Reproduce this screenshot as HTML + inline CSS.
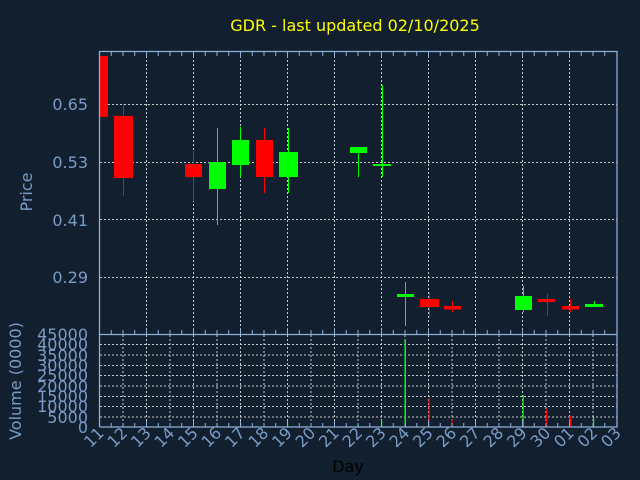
<!DOCTYPE html>
<html><head><style>
html,body{margin:0;padding:0;background:#111f2f;}
svg{display:block;}
text{font-family:"DejaVu Sans","Liberation Sans",sans-serif;}
</style></head><body>
<svg width="640" height="480" viewBox="0 0 640 480" xmlns="http://www.w3.org/2000/svg">
<rect width="640" height="480" fill="#111f2f"/>
<text x="355" y="31" font-size="16" fill="#ffff00" text-anchor="middle">GDR - last updated 02/10/2025</text>
<g stroke="#c8c8c8" stroke-width="1" stroke-dasharray="2,2" fill="none">
<path d="M146.5 52V334M193.5 52V334M240.5 52V334M287.5 52V334M334.5 52V334M381.5 52V334M428.5 52V334M475.5 52V334M522.5 52V334M569.5 52V334"/>
<path d="M100 104.5H617M100 162.5H617M100 219.5H617M100 277.5H617"/>
<path d="M123 335V427M146.5 335V427M170 335V427M193.5 335V427M217 335V427M240.5 335V427M264 335V427M287.5 335V427M311 335V427M334.5 335V427M358 335V427M381.5 335V427M405 335V427M428.5 335V427M452 335V427M475.5 335V427M499 335V427M522.5 335V427M546 335V427M569.5 335V427M593 335V427"/>
<path d="M100 344.5H617M100 355H617M100 365.5H617M100 375.5H617M100 386H617M100 396.5H617M100 406.5H617M100 417H617"/>
</g>
<g>
<rect x="99.5" y="56" width="8.5" height="61" fill="#ff0000"/>
<line x1="123.5" y1="104" x2="123.5" y2="196" stroke="#ff0000"/><rect x="114" y="116" width="19" height="62" fill="#ff0000"/>
<line x1="193.5" y1="151" x2="193.5" y2="201" stroke="#ff0000"/><rect x="185" y="164" width="17" height="13" fill="#ff0000"/>
<line x1="217.5" y1="128" x2="217.5" y2="225" stroke="#00ff00"/><rect x="209" y="162" width="17" height="27" fill="#00ff00"/>
<line x1="240.5" y1="127" x2="240.5" y2="177" stroke="#00ff00"/><rect x="232" y="140" width="17" height="25" fill="#00ff00"/>
<line x1="264.5" y1="128" x2="264.5" y2="193" stroke="#ff0000"/><rect x="256" y="140" width="17" height="37" fill="#ff0000"/>
<line x1="288.5" y1="128" x2="288.5" y2="193" stroke="#00ff00"/><rect x="279" y="152" width="19" height="25" fill="#00ff00"/>
<line x1="358.5" y1="147" x2="358.5" y2="177" stroke="#00ff00"/><rect x="350" y="147" width="17" height="6" fill="#00ff00"/>
<line x1="382.5" y1="85" x2="382.5" y2="177" stroke="#00ff00"/><rect x="373" y="164" width="18" height="2" fill="#00ff00"/>
<line x1="405.5" y1="282" x2="405.5" y2="326" stroke="#00ff00"/><rect x="397" y="294" width="17" height="3" fill="#00ff00"/>
<line x1="429.5" y1="292" x2="429.5" y2="317" stroke="#ff0000"/><rect x="420" y="299" width="19" height="8" fill="#ff0000"/>
<line x1="452.5" y1="301" x2="452.5" y2="312" stroke="#ff0000"/><rect x="444" y="306" width="17" height="3.5" fill="#ff0000"/>
<line x1="523.5" y1="286" x2="523.5" y2="312" stroke="#00ff00"/><rect x="515" y="296" width="17" height="14" fill="#00ff00"/>
<line x1="547.5" y1="294" x2="547.5" y2="316" stroke="#ff0000"/><rect x="538" y="299" width="17" height="3" fill="#ff0000"/>
<line x1="570.5" y1="299" x2="570.5" y2="312" stroke="#ff0000"/><rect x="562" y="306" width="17" height="3.5" fill="#ff0000"/>
<line x1="594.5" y1="301" x2="594.5" y2="304" stroke="#00ff00"/><rect x="585" y="304" width="18" height="3" fill="#00ff00"/>
</g>
<g>
<rect x="122.5" y="424" width="1.2" height="3" fill="#ff0000"/>
<rect x="193" y="425.5" width="1.2" height="1.5" fill="#ff0000"/>
<rect x="216.5" y="423.5" width="1.2" height="3.5" fill="#00ff00"/>
<rect x="240" y="423" width="1.2" height="4" fill="#00ff00"/>
<rect x="263.5" y="425.5" width="1.2" height="1.5" fill="#ff0000"/>
<rect x="287" y="423" width="1.2" height="4" fill="#00ff00"/>
<rect x="357.5" y="424" width="1.2" height="3" fill="#00ff00"/>
<rect x="381" y="420.5" width="1.2" height="6.5" fill="#00ff00"/>
<rect x="404.5" y="341" width="1.5" height="86" fill="#00ff00"/>
<rect x="428.5" y="398" width="1.2" height="29" fill="#ff0000"/>
<rect x="451.5" y="419.5" width="1.2" height="7.5" fill="#ff0000"/>
<rect x="522.5" y="395" width="1.2" height="32" fill="#00ff00"/>
<rect x="546" y="409.5" width="1.2" height="17.5" fill="#ff0000"/>
<rect x="569.5" y="415.5" width="2" height="11.5" fill="#ff0000"/>
<rect x="593" y="417.5" width="1.2" height="9.5" fill="#00ff00"/>
</g>
<g stroke="#8fb0d8" stroke-width="1.3" fill="none">
<path d="M99.5 427V51.5H617V427H99.5M99.5 334.5H617"/>
</g>
<g stroke="#8fb0d8" stroke-width="1" id="tk">
<path d="M111.25 52v4M123 52v4M134.75 52v4M158.25 52v4M170 52v4M181.75 52v4M205.25 52v4M217 52v4M228.75 52v4M252.25 52v4M264 52v4M275.75 52v4M299.25 52v4M311 52v4M322.75 52v4M346.25 52v4M358 52v4M369.75 52v4M393.25 52v4M405 52v4M416.75 52v4M440.25 52v4M452 52v4M463.75 52v4M487.25 52v4M499 52v4M510.75 52v4M534.25 52v4M546 52v4M557.75 52v4M581.25 52v4M593 52v4M604.75 52v4"/>
<path d="M146.5 52v6M193.5 52v6M240.5 52v6M287.5 52v6M334.5 52v6M381.5 52v6M428.5 52v6M475.5 52v6M522.5 52v6M569.5 52v6"/>
</g>
<use href="#tk" transform="translate(0,386) scale(1,-1)"/>
<use href="#tk" transform="translate(0,479) scale(1,-1)"/>
<g font-size="16" fill="#7a9cc6" text-anchor="end">
<text x="88" y="110">0.65</text>
<text x="88" y="168">0.53</text>
<text x="88" y="226">0.41</text>
<text x="88" y="283">0.29</text>
<text x="88" y="340">45000</text>
<text x="88" y="350">40000</text>
<text x="88" y="361">35000</text>
<text x="88" y="371">30000</text>
<text x="88" y="381">25000</text>
<text x="88" y="392">20000</text>
<text x="88" y="402">15000</text>
<text x="88" y="412">10000</text>
<text x="88" y="423">5000</text>
<text x="88" y="433">0</text>
</g>
<g font-size="16" fill="#7a9cc6" text-anchor="middle">
<text transform="translate(32,192) rotate(-90)">Price</text>
<text transform="translate(21,381) rotate(-90)">Volume (0000)</text>
</g>
<g font-size="16" fill="#7a9cc6" text-anchor="end">
<text transform="translate(105,434) rotate(-45)">11</text>
<text transform="translate(128.5,434) rotate(-45)">12</text>
<text transform="translate(152,434) rotate(-45)">13</text>
<text transform="translate(175.5,434) rotate(-45)">14</text>
<text transform="translate(199,434) rotate(-45)">15</text>
<text transform="translate(222.5,434) rotate(-45)">16</text>
<text transform="translate(246,434) rotate(-45)">17</text>
<text transform="translate(269.5,434) rotate(-45)">18</text>
<text transform="translate(293,434) rotate(-45)">19</text>
<text transform="translate(316.5,434) rotate(-45)">20</text>
<text transform="translate(340,434) rotate(-45)">21</text>
<text transform="translate(363.5,434) rotate(-45)">22</text>
<text transform="translate(387,434) rotate(-45)">23</text>
<text transform="translate(410.5,434) rotate(-45)">24</text>
<text transform="translate(434,434) rotate(-45)">25</text>
<text transform="translate(457.5,434) rotate(-45)">26</text>
<text transform="translate(481,434) rotate(-45)">27</text>
<text transform="translate(504.5,434) rotate(-45)">28</text>
<text transform="translate(528,434) rotate(-45)">29</text>
<text transform="translate(551.5,434) rotate(-45)">30</text>
<text transform="translate(575,434) rotate(-45)">01</text>
<text transform="translate(598.5,434) rotate(-45)">02</text>
<text transform="translate(622,434) rotate(-45)">03</text>
</g>
<text x="348" y="472" font-size="16" fill="#000000" text-anchor="middle">Day</text>
</svg>
</body></html>
